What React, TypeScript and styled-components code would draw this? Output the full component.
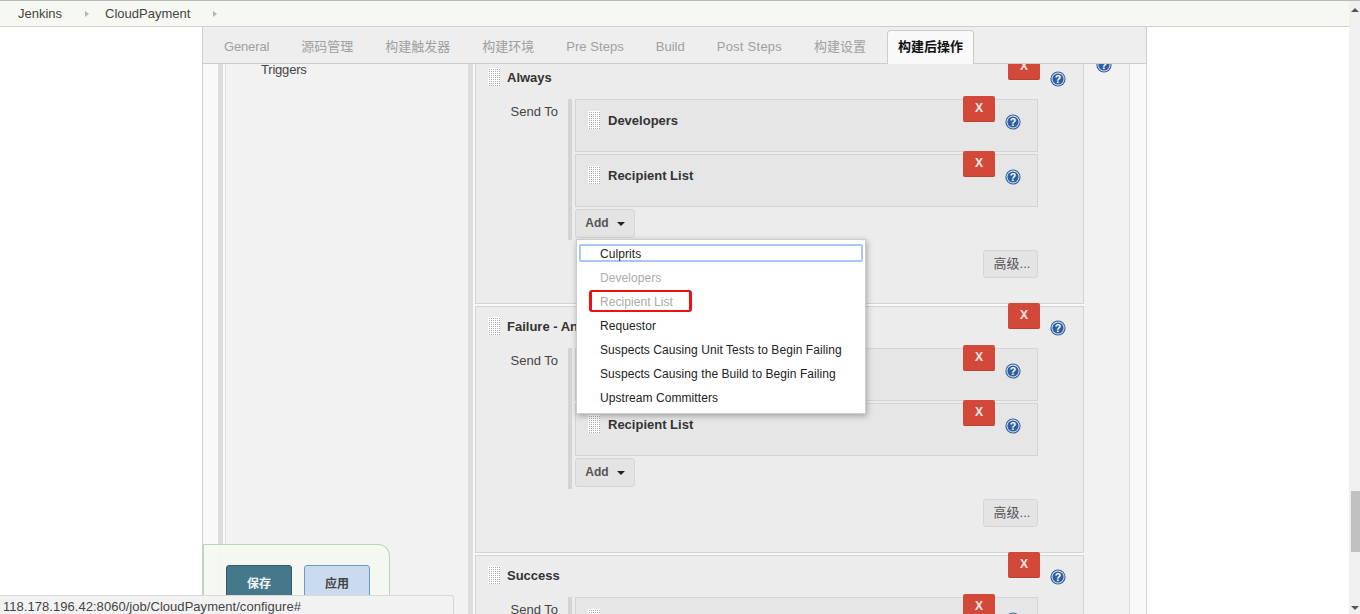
import styled, { createGlobalStyle } from "styled-components";

const GlobalStyle = createGlobalStyle`
  html, body {
    margin: 0;
    padding: 0;
    height: 100%;
    overflow: hidden;
    background: #fff;
    font-family: "Liberation Sans", "Noto Sans CJK SC", sans-serif;
    font-size: 13px;
    color: #333;
  }
  * {
    box-sizing: border-box;
  }
`;

const Page = styled.div`
  position: relative;
  display: flex;
  width: 1360px;
  height: 614px;
  overflow: hidden;
  border-top: 1px solid #b8b8b8;
`;

const Main = styled.div`
  display: flex;
  flex-direction: column;
  width: 1349px;
`;

const Breadcrumb = styled.div`
  display: flex;
  align-items: center;
  flex: none;
  height: 26px;
  padding-left: 18px;
  background: #f6f9f2;
  border-bottom: 1px solid #cfcfcf;
  color: #444;
`;

const Crumb = styled.span`
  line-height: 16px;
`;

const CrumbArrow = styled.span`
  width: 0;
  height: 0;
  margin: 1px 16px 0 23px;
  border-left: 4px solid #b5b5b5;
  border-top: 3.5px solid transparent;
  border-bottom: 3.5px solid transparent;
`;

const Workspace = styled.div`
  display: flex;
  flex: 1;
  min-height: 0;
  padding-left: 202px;
`;

const Form = styled.div`
  position: relative;
  display: flex;
  flex-direction: column;
  width: 945px;
  border-left: 1px solid #cfcfcf;
  border-right: 1px solid #cfcfcf;
`;

const TabBar = styled.div`
  display: flex;
  align-items: flex-end;
  flex: none;
  gap: 8px;
  height: 37px;
  padding-left: 9px;
  background: #eee;
  border-bottom: 1px solid #ccc;
`;

const Tab = styled.div<{ $active?: boolean; $spacing?: number }>`
  height: 34px;
  margin: 0 0 -1px ${(p) => (p.$active ? 1 : 0)}px;
  padding: 0 ${(p) => (p.$active ? 10 : 11)}px;
  border: 1px solid ${(p) => (p.$active ? "#ccc" : "transparent")};
  border-bottom: 0;
  border-radius: 4px 4px 0 0;
  background: ${(p) => (p.$active ? "#f9f9f9" : "transparent")};
  color: ${(p) => (p.$active ? "#111" : "#a0a0a0")};
  font-weight: ${(p) => (p.$active ? 700 : 400)};
  letter-spacing: ${(p) => p.$spacing ?? 0}px;
  line-height: 31px;
`;

const ScrollArea = styled.div`
  flex: 1;
  min-height: 0;
  overflow: hidden;
  padding: 0 17px 0 15px;
  background: #f9f9f9;
`;

const Content = styled.div`
  display: flex;
  margin-top: -7px;
`;

const Rule = styled.div`
  flex: none;
  width: 5px;
  margin-right: 2px;
  background: #ddd;
`;

const SidePanel = styled.div`
  flex: none;
  width: 243px;
  padding: 5px 0 0 35px;
  background: #f2f2f2;
  border-left: 1px solid #ddd;
  letter-spacing: -0.2px;
  line-height: 16px;
  color: #444;
`;

const Sections = styled.div`
  display: flex;
  flex-direction: column;
  flex: none;
  gap: 2px;
  width: 609px;
`;

const OuterHelpColumn = styled.div`
  flex: 1;
  padding-left: 12px;
  background: #f2f2f2;
  border-right: 1px solid #ddd;
  margin-right: -1px;
`;

const Section = styled.div`
  position: relative;
  flex: none;
  height: 247px;
  background: #ececec;
  border: 1px solid #d4d4d4;
`;

const SectionHeader = styled.div`
  display: flex;
  align-items: center;
  gap: 7px;
  height: 38px;
  padding-left: 12px;
`;

const Grip = styled.span`
  flex: none;
  width: 12px;
  height: 18px;
  background-color: #aaa;
  background-image: linear-gradient(#fff 1px, transparent 1px),
    linear-gradient(90deg, #fff 1px, transparent 1px);
  background-size: 2px 2px;
`;

const Title = styled.span`
  font-weight: 700;
  color: #333;
`;

const Tools = styled.div<{ $help: number; $right: number }>`
  position: absolute;
  display: flex;
  align-items: flex-start;
  gap: 10px;
  right: ${(p) => p.$right}px;
  top: -4px;
  svg {
    margin-top: ${(p) => p.$help}px;
  }
`;

const DeleteButton = styled.div`
  width: 32px;
  height: 26px;
  background: #d24939;
  border-bottom: 1px solid #bd3f30;
  border-radius: 2px;
  color: #f7e9e6;
  font-weight: 700;
  font-size: 12px;
  line-height: 25px;
  text-align: center;
`;

const SendRow = styled.div`
  display: flex;
  margin-top: 3px;
`;

const SendLabel = styled.div`
  flex: none;
  width: 82px;
  padding-top: 5px;
  text-align: right;
  line-height: 16px;
  color: #444;
`;

const SendBody = styled.div`
  display: flex;
  flex-direction: column;
  gap: 2px;
  width: 470px;
  margin-left: 10px;
  padding-left: 3px;
  border-left: 4px solid #d4d4d4;
  padding-bottom: 2px;
`;

const Card = styled.div`
  position: relative;
  height: 53px;
  background: #e6e6e6;
  border: 1px solid #d4d4d4;
`;

const CardHeader = styled.div`
  display: flex;
  align-items: center;
  gap: 8px;
  height: 40px;
  padding-left: 12px;
`;

const AddWrap = styled.div`
  position: relative;
  width: 60px;
`;

const GrayButton = styled.div`
  display: flex;
  align-items: center;
  justify-content: center;
  background: #e4e4e4;
  border: 1px solid #d6d6d6;
  border-radius: 3px;
  color: #555;
  font-size: 12px;
  font-weight: 700;
`;

const AddButton = styled(GrayButton)`
  gap: 8px;
  height: 29px;
  padding-bottom: 2px;
`;

const Caret = styled.span`
  width: 0;
  height: 0;
  margin-top: 3px;
  border-top: 4px solid #222;
  border-left: 4px solid transparent;
  border-right: 4px solid transparent;
`;

const AdvancedRow = styled.div`
  display: flex;
  justify-content: flex-end;
  padding: 10px 45px 0 0;
`;

const AdvancedButton = styled(GrayButton)`
  width: 55px;
  height: 28px;
  padding: 0 0 3px 3px;
  font-weight: 400;
  font-size: 13px;
`;

const Menu = styled.div`
  position: absolute;
  z-index: 5;
  display: flex;
  flex-direction: column;
  gap: 6px;
  top: 30px;
  left: 1px;
  width: 290px;
  height: 175px;
  padding: 4px 2px 0;
  background: #fff;
  border: 1px solid #ccc;
  box-shadow: 1px 2px 6px rgba(0, 0, 0, 0.3);
  font-size: 12px;
  letter-spacing: 0.07px;
`;

const MenuItem = styled.div<{ $disabled?: boolean; $focused?: boolean }>`
  flex: none;
  height: 18px;
  padding-left: 19px;
  border: 2px solid ${(p) => (p.$focused ? "#a9c6f6" : "transparent")};
  border-radius: 2px;
  color: ${(p) => (p.$disabled ? "#aaa" : "#222")};
  line-height: 16px;
`;

const Highlight = styled.div`
  position: absolute;
  top: 50px;
  left: 12px;
  width: 103px;
  height: 22px;
  border-style: solid;
  border-color: #f01010;
  border-width: 2px 3px;
  border-radius: 3px;
`;

const SaveBar = styled.div`
  position: absolute;
  display: flex;
  align-items: flex-start;
  gap: 12px;
  left: 0;
  top: 517px;
  bottom: 0;
  width: 187px;
  padding: 20px 0 0 22px;
  background: rgba(244, 248, 240, 0.92);
  border: 1px solid #b3d6bf;
  border-bottom: 0;
  border-radius: 0 12px 0 0;
`;

const SaveButton = styled.div<{ $primary?: boolean }>`
  width: 66px;
  height: 36px;
  background: ${(p) => (p.$primary ? "#45788a" : "#c9dbed")};
  border: 1px solid ${(p) => (p.$primary ? "#2f5a68" : "#6c99c9")};
  border-radius: 3px;
  color: ${(p) => (p.$primary ? "#f2f7f8" : "#444")};
  font-weight: 700;
  font-size: 12px;
  line-height: 36px;
  text-align: center;
`;

const StatusBar = styled.div`
  position: absolute;
  left: 0;
  bottom: 0;
  width: 454px;
  height: 19px;
  padding-left: 3px;
  background: #f2f2f2;
  border-top: 1px solid #d8d8d8;
  border-right: 1px solid #d8d8d8;
  border-radius: 0 3px 0 0;
  color: #444;
  font-size: 13px;
  letter-spacing: 0.04px;
  line-height: 22px;
`;

const Scrollbar = styled.div`
  display: flex;
  flex-direction: column;
  align-items: flex-end;
  width: 11px;
  background: #f0f0f0;
`;

const ScrollArrow = styled.span<{ $down?: boolean }>`
  width: 0;
  height: 0;
  margin: ${(p) => (p.$down ? "54px 1px 0 0" : "7px 1px 0 0")};
  border-left: 4px solid transparent;
  border-right: 4px solid transparent;
  border-top: ${(p) => (p.$down ? "4px solid #555" : "0")};
  border-bottom: ${(p) => (p.$down ? "0" : "4px solid #555")};
`;

const ScrollThumb = styled.div`
  width: 9px;
  height: 61px;
  margin-top: 479px;
  background: #c1c1c1;
`;

function HelpIcon() {
  return (
    <svg width="16" height="16" viewBox="0 0 16 16" style={{ flex: "none" }}>
      <circle cx="8" cy="8" r="7.6" fill="#2f5f9e" />
      <circle cx="8" cy="8" r="6.5" fill="#e8eef6" />
      <circle cx="8" cy="8" r="5.6" fill="#2f5f9e" />
      <text
        x="8"
        y="11.6"
        textAnchor="middle"
        fontSize="10.5"
        fontWeight="700"
        fontFamily="Liberation Sans, sans-serif"
        fill="#fff"
      >
        ?
      </text>
    </svg>
  );
}

const tabs = [
  { label: "General", spacing: -0.15 },
  { label: "源码管理" },
  { label: "构建触发器" },
  { label: "构建环境" },
  { label: "Pre Steps", spacing: 0.05 },
  { label: "Build" },
  { label: "Post Steps", spacing: 0.25 },
  { label: "构建设置" },
  { label: "构建后操作" },
];

const menuItems = [
  { label: "Culprits", focused: true },
  { label: "Developers", disabled: true },
  { label: "Recipient List", disabled: true },
  { label: "Requestor" },
  { label: "Suspects Causing Unit Tests to Begin Failing" },
  { label: "Suspects Causing the Build to Begin Failing" },
  { label: "Upstream Committers" },
];

function RecipientCard({ name }: { name: string }) {
  return (
    <Card>
      <CardHeader>
        <Grip />
        <Title>{name}</Title>
      </CardHeader>
      <Tools $help={18} $right={16}>
        <DeleteButton>X</DeleteButton>
        <HelpIcon />
      </Tools>
    </Card>
  );
}

function TriggerSection({ title, open }: { title: string; open?: boolean }) {
  return (
    <Section>
      <SectionHeader>
        <Grip />
        <Title>{title}</Title>
      </SectionHeader>
      <Tools $help={17} $right={17}>
        <DeleteButton>X</DeleteButton>
        <HelpIcon />
      </Tools>
      <SendRow>
        <SendLabel>Send To</SendLabel>
        <SendBody>
          <RecipientCard name="Developers" />
          <RecipientCard name="Recipient List" />
          <AddWrap>
            <AddButton>
              Add
              <Caret />
            </AddButton>
            {open && (
              <Menu>
                {menuItems.map((item) => (
                  <MenuItem
                    key={item.label}
                    $disabled={item.disabled}
                    $focused={item.focused}
                  >
                    {item.label}
                  </MenuItem>
                ))}
                <Highlight />
              </Menu>
            )}
          </AddWrap>
        </SendBody>
      </SendRow>
      <AdvancedRow>
        <AdvancedButton>高级...</AdvancedButton>
      </AdvancedRow>
    </Section>
  );
}

export default function App() {
  return (
    <Page>
      <GlobalStyle />
      <Main>
        <Breadcrumb>
          <Crumb>Jenkins</Crumb>
          <CrumbArrow />
          <Crumb>CloudPayment</Crumb>
          <CrumbArrow />
        </Breadcrumb>
        <Workspace>
          <Form>
            <TabBar>
              {tabs.map((tab) => (
                <Tab
                  key={tab.label}
                  $active={tab.label === "构建后操作"}
                  $spacing={tab.spacing}
                >
                  {tab.label}
                </Tab>
              ))}
            </TabBar>
            <ScrollArea>
              <Content>
                <Rule />
                <SidePanel>Triggers</SidePanel>
                <Rule />
                <Sections>
                  <TriggerSection title="Always" open />
                  <TriggerSection title="Failure - Any" />
                  <TriggerSection title="Success" />
                </Sections>
                <OuterHelpColumn>
                  <HelpIcon />
                </OuterHelpColumn>
              </Content>
            </ScrollArea>
            <SaveBar>
              <SaveButton $primary>保存</SaveButton>
              <SaveButton>应用</SaveButton>
            </SaveBar>
          </Form>
        </Workspace>
      </Main>
      <Scrollbar>
        <ScrollArrow />
        <ScrollThumb />
        <ScrollArrow $down />
      </Scrollbar>
      <StatusBar>118.178.196.42:8060/job/CloudPayment/configure#</StatusBar>
    </Page>
  );
}
